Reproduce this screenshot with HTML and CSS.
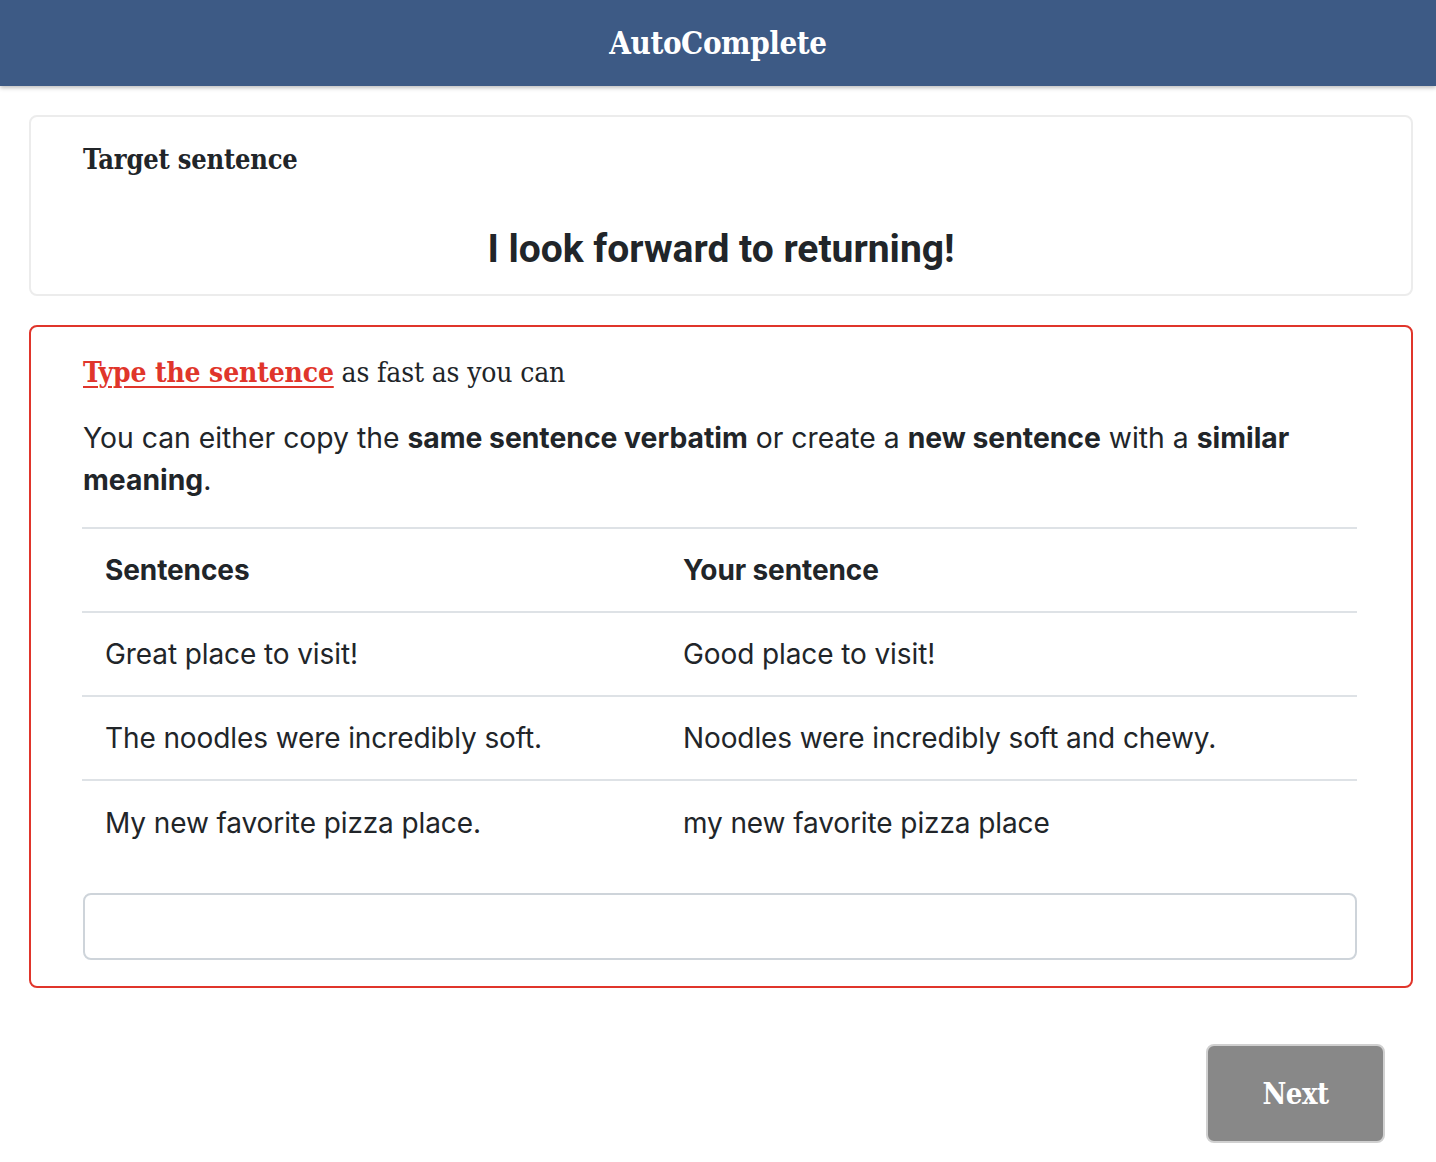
FILE: index.html
```html
<!DOCTYPE html>
<html>
<head>
<meta charset="utf-8">
<link rel="stylesheet" href="styles.css">
</head>
<body>
<header class="topbar">AutoComplete</header>
<main class="page">
  <section class="card target">
    <h2 class="card-title">Target sentence</h2>
    <p class="target-text">I look forward to returning!</p>
  </section>
  <section class="card task">
    <h2 class="task-title"><u class="hl">Type the sentence</u> as fast as you can</h2>
    <p class="desc">You can either copy the <b>same sentence verbatim</b> or create a <b>new sentence</b> with a <b>similar meaning</b>.</p>
    <table class="examples">
      <thead>
        <tr><th class="col-a">Sentences</th><th>Your sentence</th></tr>
      </thead>
      <tbody>
        <tr><td>Great place to visit!</td><td>Good place to visit!</td></tr>
        <tr><td>The noodles were incredibly soft.</td><td>Noodles were incredibly soft and chewy.</td></tr>
        <tr><td>My new favorite pizza place.</td><td>my new favorite pizza place</td></tr>
      </tbody>
    </table>
    <input class="entry" type="text">
  </section>
  <div class="actions">
    <button class="next">Next</button>
  </div>
</main>
</body>
</html>
```
FILE: styles.css
```css
* { box-sizing: border-box; }
body {
  margin: 0;
  background: #fff;
  font-family: Inter, "Noto Sans", sans-serif;
  color: #212529;
}
.topbar {
  height: 86px;
  background: #3d5a85;
  color: #fff;
  font-family: "DejaVu Serif Condensed", "DejaVu Serif", serif;
  font-stretch: condensed;
  font-weight: bold;
  font-size: 31px;
  display: flex;
  align-items: center;
  justify-content: center;
  box-shadow: 0 2px 4px rgba(0,0,0,0.25);
  letter-spacing: -0.4px;
}
.page {
  padding: 29px 23px 0 29px;
}
.card {
  border-radius: 8px;
  background: #fff;
}
.target {
  border: 2px solid #ececec;
  height: 181px;
  padding: 24px 52px 0;
}
.card-title {
  margin: 0;
  font-family: "DejaVu Serif Condensed", "DejaVu Serif", serif;
  font-stretch: condensed;
  font-size: 27px;
  font-weight: bold;
  letter-spacing: -0.2px;
  line-height: 38px;
}
.target-text {
  margin: 46px 0 0;
  text-align: center;
  font-family: Roboto, sans-serif;
  font-weight: bold;
  font-size: 39px;
  line-height: 48px;
}
.task {
  margin-top: 29px;
  border: 2px solid #e0352b;
  height: 663px;
  padding: 26px 54px 0 51px;
}
.task-title {
  margin: 0 0 0 1px;
  font-family: "DejaVu Serif Condensed", "DejaVu Serif", serif;
  font-stretch: condensed;
  font-weight: normal;
  font-size: 28px;
  line-height: 40px;
  letter-spacing: -0.15px;
}
.hl {
  color: #e0352b;
  font-weight: bold;
  text-decoration-thickness: 2px;
  text-underline-offset: 4px;
}
.desc {
  margin: 24px 0 0 1px;
  font-size: 28.3px;
  line-height: 42px;
  letter-spacing: 0;
}
.desc b { font-weight: 700; }
.examples {
  width: 100%;
  margin-top: 26px;
  border-collapse: collapse;
  table-layout: fixed;
  font-size: 28px;
  letter-spacing: -0.1px;
}
.examples th, .examples td {
  text-align: left;
  height: 84px;
  padding: 0 23px;
  vertical-align: middle;
}
.examples .col-a {
  width: 578px;
}
.examples th {
  font-weight: 700;
  border-top: 2px solid #dee2e6;
  border-bottom: 2px solid #dee2e6;
}
.examples tbody tr:not(:last-child) td {
  border-bottom: 2px solid #dee2e6;
}
.entry {
  display: block;
  width: calc(100% - 1px);
  margin-left: 1px;
  height: 67px;
  margin-top: 29px;
  border: 2px solid #ced4da;
  border-radius: 8px;
  font-size: 24px;
  padding: 0 16px;
}
.actions {
  display: flex;
  justify-content: flex-end;
  padding: 56px 28px 20px 0;
}
.next {
  width: 179px;
  height: 99px;
  background: #888;
  color: #fff;
  border: 2px solid #d0d0d0;
  border-radius: 8px;
  font-family: "DejaVu Serif Condensed", "DejaVu Serif", serif;
  font-stretch: condensed;
  font-weight: bold;
  font-size: 29px;
  letter-spacing: -0.5px;
}
```
